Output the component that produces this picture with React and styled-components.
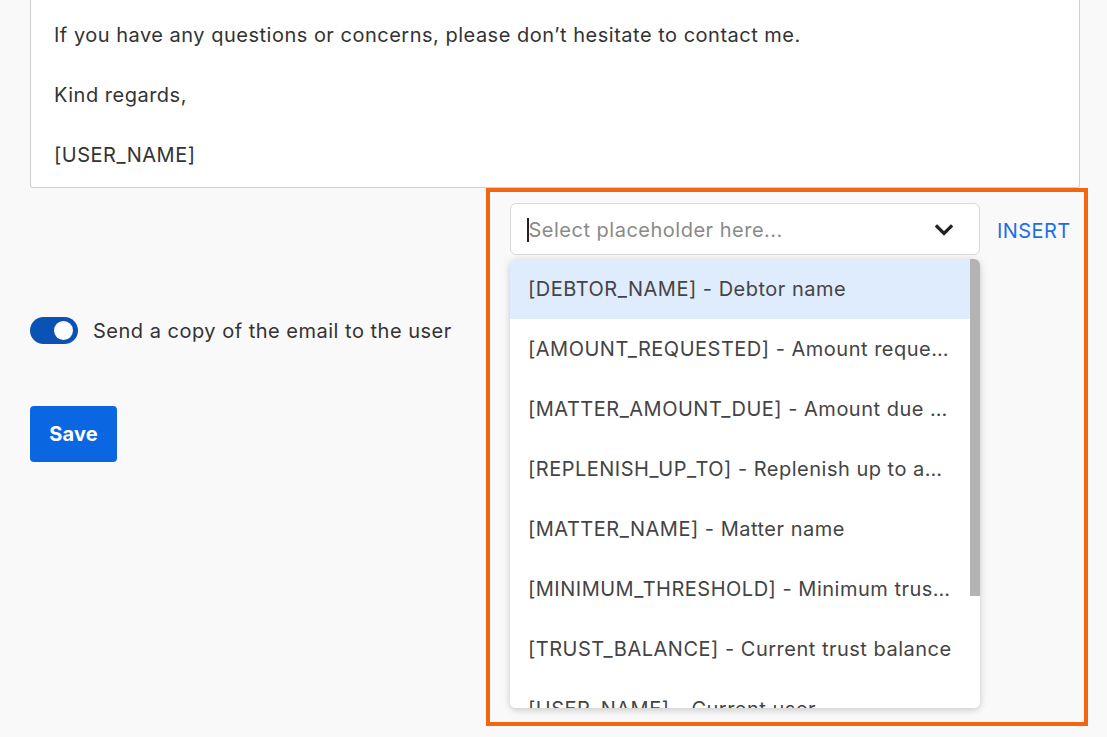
import styled, { createGlobalStyle } from "styled-components";

const GlobalStyle = createGlobalStyle`
  html, body {
    margin: 0;
    padding: 0;
    background-color: #f9f9f9;
    font-family: Inter, "Noto Sans", "Liberation Sans", sans-serif;
    overflow: hidden;
  }
`;

const Page = styled.div`
  width: 1107px;
  height: 737px;
  padding-left: 30px;
  box-sizing: border-box;
  letter-spacing: 0.5px;
`;

const Editor = styled.div`
  width: 1050px;
  box-sizing: border-box;
  background-color: #ffffff;
  border: 1px solid #cfcfcf;
  border-top: none;
  border-radius: 0 0 3px 3px;
  padding: 20px 23px 17px;
`;

const Para = styled.p`
  margin: 0 0 30px;
  font-size: 20px;
  line-height: 30px;
  color: #333333;
  &:last-child {
    margin-bottom: 0;
  }
`;

const Lower = styled.div`
  display: grid;
  grid-template-columns: 456px 602px;
`;

const Settings = styled.div`
  display: flex;
  flex-direction: column;
  align-items: flex-start;
  padding-top: 129px;
`;

const ToggleRow = styled.label`
  display: flex;
  align-items: center;
  gap: 15px;
  font-size: 20px;
  line-height: 26px;
  color: #333333;
`;

const Toggle = styled.span`
  position: relative;
  width: 48px;
  height: 27px;
  border-radius: 14px;
  background-color: ${(p) => (p.on ? "#0a52b3" : "#bbbbbb")};
  &::after {
    content: "";
    position: absolute;
    top: 4px;
    left: ${(p) => (p.on ? "24px" : "5px")};
    width: 19px;
    height: 19px;
    border-radius: 50%;
    background-color: #ffffff;
  }
`;

const SaveButton = styled.button`
  margin-top: 62px;
  width: 87px;
  height: 56px;
  border: none;
  border-radius: 4px;
  background-color: #0b67e1;
  color: #ffffff;
  font-family: inherit;
  font-size: 20px;
  font-weight: 700;
  letter-spacing: 0.2px;
`;

const PlaceholderPanel = styled.div`
  position: relative;
  height: 538px;
  box-sizing: border-box;
  border: 4px solid #f2660f;
  padding: 11px 0 0 20px;
`;

const PickerRow = styled.div`
  display: flex;
  align-items: center;
  gap: 17px;
`;

const Select = styled.div`
  position: relative;
  width: 470px;
  height: 52px;
  box-sizing: border-box;
  background-color: #ffffff;
  border: 1px solid #d9d9d9;
  border-radius: 6px;
  display: flex;
  align-items: center;
  padding: 1px 26px 0 16px;
  font-size: 20px;
  color: #8a8a8a;
`;

const Caret = styled.span`
  display: inline-block;
  width: 1.5px;
  height: 24px;
  background-color: #222222;
`;

const SelectText = styled.span`
  flex: 1;
`;

const InsertLink = styled.button`
  border: none;
  background: none;
  padding: 4px 0 0;
  font-family: inherit;
  font-size: 20px;
  color: #1c6fe3;
  letter-spacing: 0.4px;
`;

const Menu = styled.div`
  position: absolute;
  top: 67px;
  left: 20px;
  width: 470px;
  height: 449px;
  background-color: #ffffff;
  border-radius: 6px;
  box-shadow: 0 2px 6px rgba(0, 0, 0, 0.16), 0 0 14px rgba(0, 0, 0, 0.05);
  overflow: hidden;
`;

const MenuList = styled.ul`
  width: 460px;
  margin: 0;
  padding: 0;
  list-style: none;
`;

const ScrollThumb = styled.div`
  position: absolute;
  top: 0;
  right: 0;
  width: 10px;
  height: 337px;
  background-color: #b3b3b3;
`;

const MenuItem = styled.li`
  height: 60px;
  line-height: 60px;
  padding: 0 18px;
  font-size: 20px;
  color: #444444;
  white-space: nowrap;
  overflow: hidden;
  text-overflow: ellipsis;
  background-color: ${(p) => (p.active ? "#dfecfd" : "#ffffff")};
`;

const items = [
  "[DEBTOR_NAME] - Debtor name",
  "[AMOUNT_REQUESTED] - Amount requested",
  "[MATTER_AMOUNT_DUE] - Amount due for matter",
  "[REPLENISH_UP_TO] - Replenish up to amount",
  "[MATTER_NAME] - Matter name",
  "[MINIMUM_THRESHOLD] - Minimum trust balance",
  "[TRUST_BALANCE] - Current trust balance",
  "[USER_NAME] - Current user",
];

const Chevron = () => (
  <svg width="18" height="12" viewBox="0 0 18 12" fill="none">
    <path d="M2 2.5 L9 9.5 L16 2.5" stroke="#222" strokeWidth="3.2" strokeLinecap="square" />
  </svg>
);

const App = () => {
  return (
    <Page>
      <GlobalStyle />
      <Editor>
        <Para>If you have any questions or concerns, please don’t hesitate to contact me.</Para>
        <Para>Kind regards,</Para>
        <Para>[USER_NAME]</Para>
      </Editor>
      <Lower>
        <Settings>
          <ToggleRow>
            <Toggle on />
            Send a copy of the email to the user
          </ToggleRow>
          <SaveButton>Save</SaveButton>
        </Settings>
        <PlaceholderPanel>
          <PickerRow>
            <Select>
              <Caret />
              <SelectText>Select placeholder here...</SelectText>
              <Chevron />
            </Select>
            <InsertLink>INSERT</InsertLink>
          </PickerRow>
          <Menu>
            <MenuList>
              {items.map((item, i) => (
                <MenuItem key={item} active={i === 0}>
                  {item}
                </MenuItem>
              ))}
            </MenuList>
            <ScrollThumb />
          </Menu>
        </PlaceholderPanel>
      </Lower>
    </Page>
  );
};

export default App;
